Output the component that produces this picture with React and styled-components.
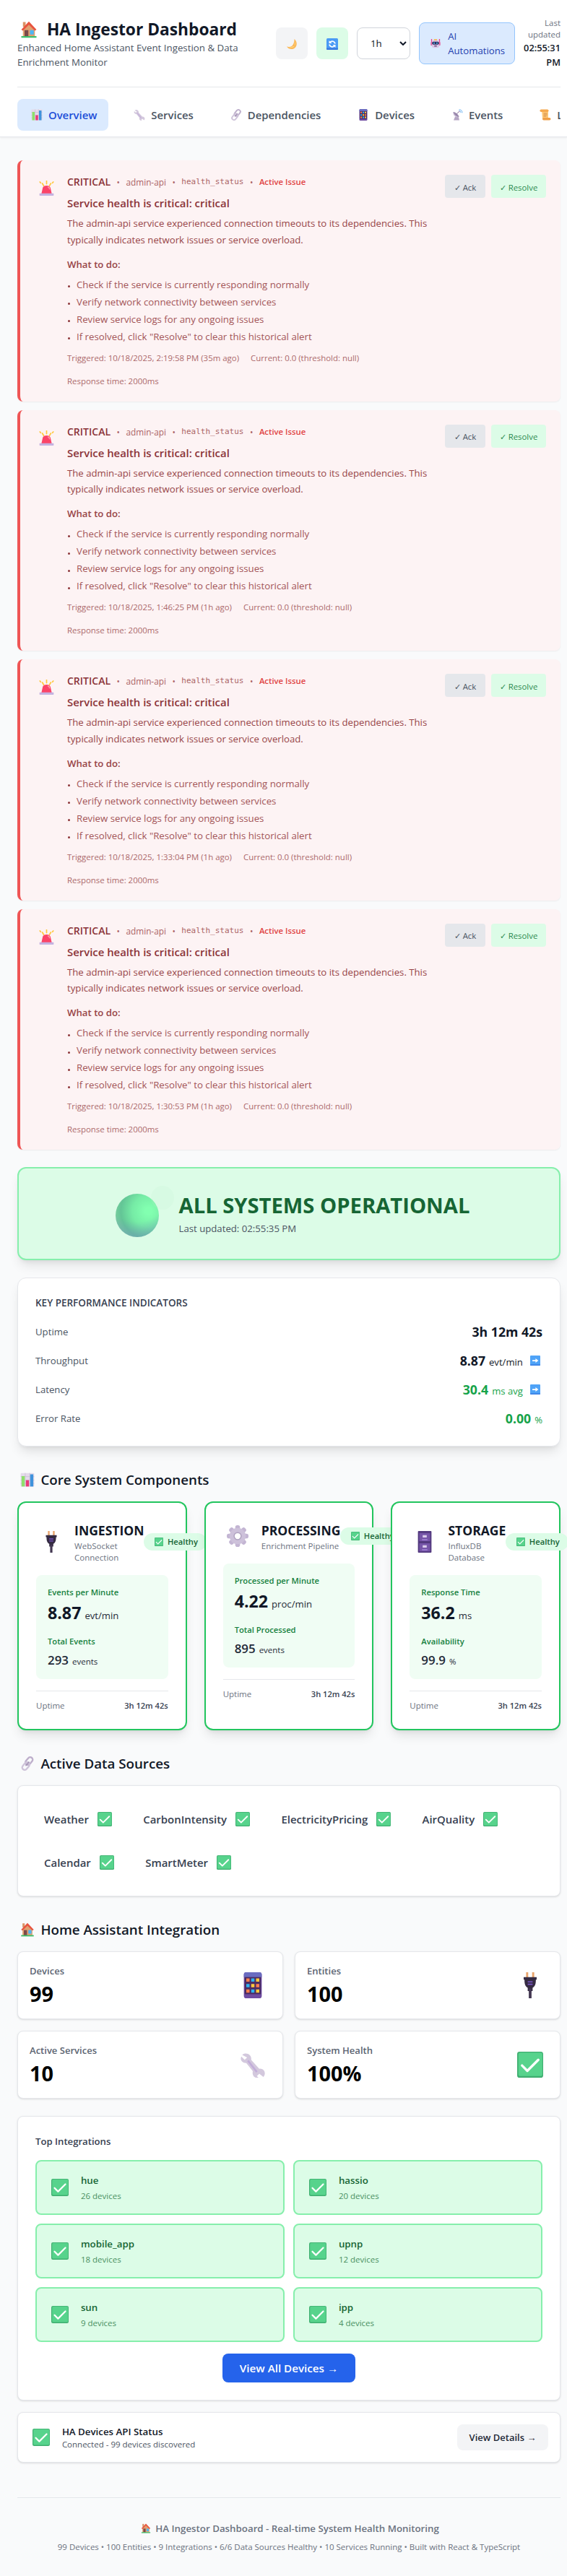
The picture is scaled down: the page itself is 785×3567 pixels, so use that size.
import React from 'react';
import styled, { createGlobalStyle } from 'styled-components';

const GlobalStyle = createGlobalStyle`
  *, *::before, *::after { box-sizing: border-box; }
  html, body { margin: 0; background: #f9fafb; }
  body {
    font-family: "Open Sans", "Noto Sans", sans-serif;
    font-size: 13.25px;
    line-height: 20px;
    color: #111827;
    overflow-x: hidden;
  }
  h1, h2, h3, p, ul { margin: 0; padding: 0; }
  button, select { font-family: inherit; }
`;

/* ---------- icons ---------- */

const IconSvg = styled.svg`
  display: inline-block;
  flex-shrink: 0;
  width: ${(p) => p.$size}px;
  height: ${(p) => p.$size}px;
  margin: 0 ${(p) => p.$size * 0.185}px;
`;

const drawings = {
  house: (
    <>
      <path d="M5 2h5v9H5z" fill="#d99467" />
      <path d="M5 15 16 4l11 11v14H5z" fill="#e0a070" />
      <path d="M2 16 16 1l14 15-3 2L16 7 5 18z" fill="#e8543f" />
      <path d="M8 17h7v12H8z" fill="#7b4a4a" />
      <path d="M18 17h7v8h-7z" fill="#4db5f5" />
      <path d="M2 28h28v3H2z" fill="#3fbf6c" />
    </>
  ),
  moon: (
    <>
      <path d="M23 2c9 8 8 20 1 25-6 5-17 4-22-4 8 2 14 0 17-5 3-4 4-10 4-16z" fill="#fbb95a" />
      <path d="M25 8c2 7 0 14-5 17-4 2-9 2-13 0 8 1 13-2 16-7 1-3 2-6 2-10z" fill="#ffd57e" />
      <circle cx="22" cy="20" r="1.6" fill="#f3a24c" />
    </>
  ),
  refresh: (
    <>
      <rect x="0" y="0" width="32" height="32" rx="3" fill="#4b9bf5" />
      <path d="M0 27h32v2a3 3 0 0 1-3 3H3a3 3 0 0 1-3-3z" fill="#3c7be0" />
      <path d="M24 15a8 8 0 0 0-14-4M8 17a8 8 0 0 0 14 4" fill="none" stroke="#fff" strokeWidth="3.6" />
      <path d="M7 6v8h8zM25 26v-8h-8z" fill="#fff" />
    </>
  ),
  robot: (
    <>
      <path d="M2 2h3v12H2zM27 2h3v12h-3z" fill="#f0418f" />
      <rect x="1" y="12" width="4" height="11" rx="2" fill="#e7468c" />
      <rect x="27" y="12" width="4" height="11" rx="2" fill="#e7468c" />
      <path d="M11 3h10v5H11z" fill="#f7b238" />
      <rect x="4" y="6" width="24" height="24" rx="8" fill="#dcc3e6" />
      <rect x="5" y="11" width="22" height="9" rx="4" fill="#2c2d5c" />
      <circle cx="11.5" cy="15.5" r="2.4" fill="#4fb8f5" />
      <circle cx="20.5" cy="15.5" r="2.4" fill="#4fb8f5" />
      <path d="M12 23h8v3h-8z" fill="#53406e" />
    </>
  ),
  chart: (
    <>
      <rect x="1" y="1" width="30" height="30" rx="2" fill="#e4dbea" />
      <path d="M1 9h30M1 17h30M1 24h30M11 1v30M21 1v30" stroke="#c9bcd5" strokeWidth="1.2" />
      <path d="M3 8h7v23H3z" fill="#8ee06c" />
      <path d="M12.500 17h7v14h-7z" fill="#e83a78" />
      <path d="M22 4h7v27h-7z" fill="#3f93dc" />
    </>
  ),
  wrench: (
    <>
      <path d="M3 4c4-4 12-1 11 6l10 11c6-1 9 6 5 10l-5-4-3 3 2 2c-6 1-8-4-7-8L8 14c-6 0-8-5-6-8l4 4 3-3z" fill="#d3c8dd" />
      <path d="m10 11 11 14" stroke="#c2add9" strokeWidth="2.200" />
    </>
  ),
  link: (
    <g fill="none" strokeLinecap="round">
      <rect x="14" y="1" width="11" height="19" rx="5.500" transform="rotate(40 19.500 10.500)" stroke="#bdaecb" strokeWidth="3.800" />
      <rect x="7" y="12" width="11" height="19" rx="5.500" transform="rotate(40 12.500 21.500)" stroke="#cfc4da" strokeWidth="3.800" />
      <path d="m13 20 6-7" stroke="#a898b8" strokeWidth="3" />
    </g>
  ),
  phone: (
    <>
      <rect x="5" y="0" width="22" height="32" rx="3" fill="#6d4aa0" />
      <path d="M5 6V3a3 3 0 0 1 3-3h16a3 3 0 0 1 3 3v3z" fill="#6a6cc0" />
      <path d="M6 6h20v21H6z" fill="#4b2c62" />
      <path d="M8 7.500h4v4H8zM20 14.500h4v4h-4zM8 21h4v4H8z" fill="#ff7f4d" />
      <path d="M14 7.500h4v4h-4zM8 14.500h4v4H8zM14 21h4v4h-4z" fill="#2fb3f0" />
      <path d="M20 7.500h4v4h-4zM14 14.500h4v4h-4zM20 21h4v4h-4z" fill="#ffc93e" />
    </>
  ),
  satellite: (
    <>
      <path d="M11 19h8l3 12H6z" fill="#b5a6c4" />
      <path d="M5 8c-2 9 6 17 16 14z" fill="#d5cadf" />
      <path d="M5 8c5-1 16 8 16 14C14 22 7 16 5 8z" fill="#9b8aae" />
      <path d="m13 15 8-8" stroke="#8a7a9c" strokeWidth="2" />
      <circle cx="21.500" cy="7" r="2" fill="#c8a5c0" />
      <path d="M21 1.500c6 0 9 4 9 9M21 5c3 0 5 2 5 5" fill="none" stroke="#6db4f2" strokeWidth="2" />
    </>
  ),
  scroll: (
    <>
      <path d="M6 3h18v24H8z" fill="#ffc977" />
      <rect x="1" y="1" width="24" height="7" rx="3.500" fill="#f5a94f" />
      <rect x="8" y="24" width="23" height="7" rx="3.500" fill="#ef9f48" />
      <path d="M11 12h10M11 16h10M11 20h8" stroke="#c98343" strokeWidth="1.800" />
    </>
  ),
  siren: (
    <>
      <path d="m7 6 3 5M16 1v6M25 6l-3 5M2 3l1.500 2M30 3l-1.500 2" stroke="#ffc83d" strokeWidth="2.600" strokeLinecap="round" />
      <path d="M8 15c1-6 15-6 16 0l3 13H5z" fill="#fb4468" />
      <path d="M19 14c2 0 3 2 3 4" fill="none" stroke="#ff9eac" strokeWidth="2" strokeLinecap="round" />
      <rect x="1" y="27" width="30" height="5" rx="1" fill="#c4b2e0" />
    </>
  ),
  check: (
    <>
      <rect x="0" y="0" width="32" height="32" rx="3" fill="#3fae70" />
      <rect x="1.500" y="1" width="29.500" height="29" rx="2.500" fill="#57d38c" />
      <path d="m6 17 6.500 6.500L26 10" fill="none" stroke="#fff" strokeWidth="3" strokeLinecap="round" strokeLinejoin="round" />
    </>
  ),
  plug: (
    <>
      <path d="M11 0h2.600v8H11zM18.400 0H21v8h-2.600z" fill="#e8a46c" />
      <path d="M8 6h16v3h-1c0 6-1 8-4 10v4h-6v-4c-3-2-4-4-4-10H8z" fill="#352b42" />
      <path d="M13 11h6v1.500h-6zM13 14h6v1.500h-6z" fill="#7a55c8" />
      <path d="M14.300 20h3.400v12h-3.400z" fill="#443852" />
    </>
  ),
  gear: (
    <>
      <g fill="#c3b5d3">
        {[0, 45, 90, 135, 180, 225, 270, 315].map((angle) => (
          <rect key={angle} x="12.500" y="0" width="7" height="10" rx="3" transform={`rotate(${angle} 16 16)`} />
        ))}
      </g>
      <circle cx="16" cy="16" r="8.500" fill="none" stroke="#cdc1da" strokeWidth="7" />
      <circle cx="16" cy="16" r="5.200" fill="none" stroke="#b0a3c0" strokeWidth="1.600" />
    </>
  ),
  cabinet: (
    <>
      <rect x="6" y="0" width="20" height="32" rx="1" fill="#52397e" />
      <path d="M8 3h16v12H8zM8 18h16v12H8z" fill="#7655a8" />
      <path d="M13 6h6v3.500h-6zM13 21h6v3.500h-6z" fill="#d9cbea" />
      <path d="M12 12h8v1.500h-8zM12 27h8v1.500h-8z" fill="#a483d8" />
    </>
  ),
  arrow: (
    <>
      <rect x="0" y="0" width="32" height="32" rx="2.500" fill="#4fa3f7" />
      <path d="M0 28h32v1.500a2.500 2.500 0 0 1-2.500 2.500h-27A2.500 2.500 0 0 1 0 29.500z" fill="#3c82e6" />
      <path d="M7 14h10V9l9 7-9 7v-5H7z" fill="#fff" />
    </>
  ),
};

const Icon = ({ name, size, ...rest }) => (
  <IconSvg viewBox="0 0 32 32" $size={size} aria-hidden="true" {...rest}>
    {drawings[name]}
  </IconSvg>
);

/* ---------- header ---------- */

const Header = styled.header`
  background: #fff;
  border-bottom: 1px solid #e5e7eb;
  box-shadow: 0 1px 3px rgba(0, 0, 0, 0.06);
  padding: 0 9px 8px 24px;
  height: 190px;
`;

const HeaderTop = styled.div`
  display: flex;
  align-items: center;
  justify-content: space-between;
  padding: 24px 0;
  height: 120px;
`;

const Brand = styled.div`
  width: 320px;
`;

const BrandTitle = styled.h1`
  display: flex;
  align-items: center;
  gap: 8px;
  height: 32px;
  padding-top: 2px;
  font-size: 22.75px;
  line-height: 32px;
  font-weight: 700;
  white-space: nowrap;
`;

const BrandSubtitle = styled.p`
  font-size: 13.3px;
  line-height: 20px;
  color: #4b5563;
`;

const Controls = styled.div`
  display: flex;
  align-items: center;
  gap: 12px;
`;

const IconButton = styled.button`
  display: flex;
  align-items: center;
  justify-content: center;
  width: 44px;
  height: 44px;
  border: 0;
  padding: 2px 0 0;
  border-radius: 8px;
  background: ${(p) => (p.$active ? '#dcfce7' : '#f3f4f6')};
`;

const RangeSelect = styled.div`
  display: flex;
  align-items: center;
  justify-content: space-between;
  width: 74px;
  height: 44px;
  padding: 0 4px 0 18px;
  border: 1px solid #d1d5db;
  border-radius: 8px;
  background: #fff;
  font-size: 13.3px;
`;

const AutomationsLink = styled.a`
  display: flex;
  align-items: center;
  gap: 8px;
  width: 133px;
  height: 58px;
  padding: 0 12px;
  border: 1px solid #93c5fd;
  border-radius: 8px;
  background: #dbeafe;
  color: #1e40af;
  font-size: 13.2px;
  line-height: 20px;
`;

const LastUpdated = styled.div`
  display: flex;
  flex-direction: column;
  width: 51px;
  text-align: right;
  small { font-size: 11.5px; line-height: 16px; color: #6b7280; }
  strong { font-size: 12.8px; line-height: 20px; font-weight: 600; }
`;

const Nav = styled.nav`
  display: flex;
  gap: 16px;
  padding-top: 16px;
  border-top: 1px solid #e5e7eb;
  overflow: hidden;
`;

const Tab = styled.button`
  display: flex;
  align-items: center;
  flex-shrink: 0;
  gap: 5px;
  height: 44px;
  padding: 0 16px;
  border: 0;
  border-radius: 8px;
  font-size: 14.9px;
  font-weight: 600;
  white-space: nowrap;
  color: ${(p) => (p.$active ? '#1d4ed8' : '#4b5563')};
  background: ${(p) => (p.$active ? '#dbeafe' : 'transparent')};
`;

/* ---------- alerts ---------- */

const Main = styled.main`
  display: flex;
  flex-direction: column;
  padding: 32px 9px 0 24px;
`;

const AlertList = styled.section`
  display: flex;
  flex-direction: column;
  gap: 12px;
  margin-bottom: 24px;
`;

const AlertCard = styled.article`
  display: flex;
  align-items: flex-start;
  padding: 20px;
  height: 333.5px;
  border-left: 4px solid #ef5555;
  border-radius: 8px;
  background: #fdf3f4;
  box-shadow: 0 1px 2px rgba(0, 0, 0, 0.06);
`;

const AlertIcon = styled.div`
  display: flex;
  justify-content: center;
  width: 33px;
  padding-top: 8px;
  margin-right: 12px;
`;

const AlertBody = styled.div`
  flex: 1;
  min-width: 0;
`;

const AlertMeta = styled.div`
  display: flex;
  align-items: center;
  gap: 8.5px;
  height: 20px;
  font-size: 11.8px;
  color: #ab6466;
  white-space: nowrap;
`;

const Severity = styled.strong`
  font-size: 14px;
  font-weight: 600;
  color: #8b3438;
`;

const Metric = styled.code`
  font-family: "DejaVu Sans Mono", "Liberation Mono", monospace;
  font-size: 11px;
`;

const ActiveIssue = styled.span`
  font-size: 11.3px;
  font-weight: 600;
  color: #e04343;
`;

const AlertTitle = styled.h3`
  margin-top: 7px;
  font-size: 14.9px;
  line-height: 24px;
  font-weight: 600;
  color: #8b3438;
`;

const AlertText = styled.p`
  margin-top: 5px;
  width: 510px;
  font-size: 13.2px;
  line-height: 22.75px;
  color: #984548;
`;

const ActionsTitle = styled.p`
  margin-top: 12px;
  font-size: 13.2px;
  font-weight: 600;
  color: #984548;
`;

const ActionsList = styled.ul`
  display: flex;
  flex-direction: column;
  gap: 4px;
  margin-top: 8px;
  list-style: none;
  font-size: 13.25px;
  color: #a35558;
`;

const ActionsItem = styled.li`
  display: flex;
  align-items: center;
  gap: 9px;
  &::before {
    content: "";
    width: 3px;
    height: 3px;
    margin: 6px 0 0 1px;
    border-radius: 50%;
    background: #8b3438;
  }
`;

const AlertFoot = styled.div`
  display: flex;
  flex-direction: column;
  gap: 16px;
  margin-top: 12px;
  font-size: 11.45px;
  line-height: 16px;
  color: #ac696b;
`;

const AlertFootLine = styled.div`
  display: flex;
  gap: 16px;
`;

const AlertButtons = styled.div`
  display: flex;
  gap: 8px;
  margin-left: -60px;
`;

const AlertButton = styled.button`
  width: ${(p) => (p.$tone === 'resolve' ? 76 : 56)}px;
  height: 32px;
  padding: 2px 0 0;
  border: 0;
  border-radius: 4px;
  font-size: 11.4px;
  font-weight: 500;
  color: ${(p) => (p.$tone === 'resolve' ? '#2c8a50' : '#4b5563')};
  background: ${(p) => (p.$tone === 'resolve' ? '#dcfce7' : '#e5e7eb')};
`;

/* ---------- status and KPIs ---------- */

const largeShadow = '0 10px 15px -3px rgba(0,0,0,.1), 0 4px 6px -4px rgba(0,0,0,.1)';
const smallShadow = '0 1px 3px rgba(0,0,0,.1), 0 1px 2px -1px rgba(0,0,0,.1)';

const StatusBanner = styled.section`
  display: flex;
  align-items: center;
  justify-content: center;
  gap: 28px;
  height: 129px;
  margin-bottom: 24px;
  padding-left: 10px;
  border: 2px solid #86efac;
  border-radius: 12px;
  background: #dcfce7;
  box-shadow: ${largeShadow};
`;

const Orb = styled.div`
  position: relative;
  width: 60px;
  height: 60px;
  margin-top: 4px;
  border-radius: 50%;
  background:
    radial-gradient(circle at 50% -10%, transparent 62%, rgba(112, 148, 190, 0.75) 105%),
    radial-gradient(circle at 76% 40%, #82ffb0 8%, #76eca6 38%, #63c596 66%, #8ad6a4 92%);
  &::after {
    content: "";
    position: absolute;
    left: 49px;
    top: -11px;
    width: 32px;
    height: 33px;
    border-radius: 50%;
    background: rgba(190, 245, 205, 0.16);
  }
`;

const BannerTitle = styled.h2`
  font-size: 29.2px;
  line-height: 36px;
  font-weight: 700;
  color: #166534;
`;

const BannerTime = styled.p`
  margin-top: 4px;
  font-size: 13.2px;
  color: #4b5563;
`;

const KpiCard = styled.section`
  display: flex;
  flex-direction: column;
  gap: 12px;
  height: 234px;
  padding: 24px;
  border: 1px solid #e5e7eb;
  border-radius: 12px;
  background: #fff;
  box-shadow: ${largeShadow};
`;

const KpiTitle = styled.h3`
  margin-bottom: 4px;
  font-size: 13.5px;
  line-height: 20px;
  font-weight: 600;
  color: #374151;
`;

const KpiRow = styled.div`
  display: flex;
  align-items: center;
  justify-content: space-between;
  height: 28px;
  color: #4b5563;
  font-size: 13.2px;
`;

const KpiValue = styled.div`
  display: flex;
  align-items: center;
  gap: 8px;
  color: ${(p) => (p.$good ? '#16a34a' : '#111827')};
  strong { font-size: 17.7px; font-weight: 700; line-height: 28px; }
  small { font-size: 13.1px; margin-left: 5px; }
`;

/* ---------- sections ---------- */

const SectionTitle = styled.h2`
  display: flex;
  align-items: center;
  gap: 5px;
  margin: 32px 0 16px;
  font-size: 18.75px;
  line-height: 28px;
  font-weight: 600;
`;

const CoreGrid = styled.div`
  display: grid;
  grid-template-columns: repeat(3, minmax(0, 1fr));
  gap: 24px;
`;

const CoreCard = styled.article`
  position: relative;
  height: 317px;
  padding: 24px;
  border: 2px solid #22c55e;
  border-radius: 12px;
  background: #fff;
  box-shadow: ${largeShadow};
`;

const CoreHead = styled.div`
  display: flex;
  align-items: center;
  justify-content: space-between;
`;

const CoreName = styled.div`
  display: flex;
  align-items: center;
  gap: 12px;
  width: min-content;
`;

const CoreTitle = styled.h3`
  font-size: 17.55px;
  line-height: 28px;
  font-weight: 700;
`;

const CoreSubtitle = styled.p`
  font-size: 11.5px;
  line-height: 16px;
  color: #6b7280;
`;

const HealthBadge = styled.span`
  display: flex;
  align-items: center;
  flex-shrink: 0;
  gap: 4px;
  height: 24px;
  padding: 0 12px;
  border-radius: 12px;
  background: #dcfce7;
  color: #166534;
  font-size: 11.2px;
  font-weight: 600;
`;

const MetricPanel = styled.div`
  display: flex;
  flex-direction: column;
  height: 144px;
  margin: 16px 0;
  padding: 16px;
  border-radius: 8px;
  background: #f0fdf4;
`;

const MetricLabel = styled.span`
  font-size: 11.2px;
  line-height: 16px;
  font-weight: 600;
  color: #15803d;
`;

const MetricValue = styled.div`
  margin: ${(p) => (p.$primary ? '4px 0 12px' : '4px 0 0')};
  line-height: ${(p) => (p.$primary ? 32 : 28)}px;
  color: #1f2937;
  strong {
    font-size: ${(p) => (p.$primary ? 23.2 : 16.9)}px;
    font-weight: ${(p) => (p.$primary ? 700 : 600)};
    color: ${(p) => (p.$primary ? '#111827' : '#1f2937')};
  }
  small { margin-left: 5px; font-size: ${(p) => (p.$primary ? 13.15 : 11.5)}px; }
`;

const CoreFoot = styled.div`
  display: flex;
  justify-content: space-between;
  padding-top: 12px;
  border-top: 1px solid #e5e7eb;
  font-size: 11.5px;
  line-height: 16px;
  color: #6b7280;
  b { font-size: 11.1px; font-weight: 600; color: #374151; }
`;

const SourceCard = styled.section`
  display: flex;
  flex-wrap: wrap;
  gap: 16px;
  height: 154px;
  padding: 24px;
  border: 1px solid #e5e7eb;
  border-radius: 8px;
  background: #fff;
  box-shadow: ${smallShadow};
`;

const Source = styled.div`
  display: flex;
  align-items: center;
  gap: 8px;
  height: 44px;
  padding: 0 12px;
  font-size: 14.95px;
  font-weight: 600;
  color: #374151;
`;

const StatGrid = styled.div`
  display: grid;
  grid-template-columns: 1fr 1fr;
  gap: 16px;
  margin-bottom: 24px;
`;

const StatCard = styled.article`
  display: flex;
  align-items: center;
  justify-content: space-between;
  height: 94px;
  padding: 16px;
  border: 1px solid #e5e7eb;
  border-radius: 8px;
  background: #fff;
  box-shadow: ${smallShadow};
`;

const StatLabel = styled.p`
  font-size: 13.05px;
  font-weight: 600;
  color: #5b6472;
`;

const StatValue = styled.p`
  margin-top: 4px;
  font-size: 28.8px;
  line-height: 36px;
  font-weight: 700;
  color: #000;
`;

const IntegrationsCard = styled.section`
  display: flex;
  flex-direction: column;
  align-items: center;
  height: 394px;
  padding: 24px;
  border: 1px solid #e5e7eb;
  border-radius: 8px;
  background: #fff;
  box-shadow: ${smallShadow};
`;

const IntegrationsTitle = styled.h3`
  align-self: flex-start;
  font-size: 13.15px;
  line-height: 20px;
  font-weight: 600;
  color: #374151;
`;

const IntegrationGrid = styled.div`
  display: grid;
  grid-template-columns: 1fr 1fr;
  gap: 12px;
  width: 100%;
  margin: 16px 0;
`;

const Integration = styled.article`
  display: flex;
  align-items: center;
  gap: 12px;
  height: 76px;
  padding: 0 16px;
  border: 2px solid #86efac;
  border-radius: 8px;
  background: #dcfce7;
`;

const IntegrationName = styled.p`
  font-size: 13.3px;
  font-weight: 600;
  color: #166534;
`;

const IntegrationCount = styled.p`
  margin-top: 4px;
  font-size: 11.5px;
  line-height: 16px;
  color: #4a9062;
`;

const PrimaryButton = styled.button`
  width: 184px;
  height: 40px;
  padding: 0;
  border: 0;
  border-radius: 8px;
  background: #2563eb;
  color: #fff;
  font-size: 15.2px;
  font-weight: 600;
`;

const ApiCard = styled.section`
  display: flex;
  align-items: center;
  gap: 12px;
  height: 70px;
  margin-top: 16px;
  padding: 16px;
  border: 1px solid #e5e7eb;
  border-radius: 8px;
  background: #fff;
  box-shadow: ${smallShadow};
`;

const ApiInfo = styled.div`
  flex: 1;
`;

const ApiTitle = styled.p`
  font-size: 13.3px;
  font-weight: 600;
`;

const ApiText = styled.p`
  font-size: 11.5px;
  line-height: 16px;
  color: #4b5563;
`;

const SecondaryButton = styled.button`
  width: 126px;
  height: 36px;
  padding: 0;
  border: 0;
  border-radius: 8px;
  background: #f3f4f6;
  color: #1f2937;
  font-size: 13px;
  font-weight: 600;
`;

const Footer = styled.footer`
  display: flex;
  flex-direction: column;
  align-items: center;
  gap: 8px;
  margin-top: 48px;
  padding: 32px 0;
  border-top: 1px solid #e5e7eb;
  color: #6b7280;
`;

const FooterTitle = styled.p`
  display: flex;
  align-items: center;
  gap: 4px;
  font-size: 13.3px;
  font-weight: 600;
`;

const FooterText = styled.p`
  font-size: 11.5px;
  line-height: 16px;
`;

/* ---------- data ---------- */

const tabs = [
  ['chart', 'Overview'],
  ['wrench', 'Services'],
  ['link', 'Dependencies'],
  ['phone', 'Devices'],
  ['satellite', 'Events'],
  ['scroll', 'Logs'],
];

const alerts = ['2:19:58 PM (35m ago)', '1:46:25 PM (1h ago)', '1:33:04 PM (1h ago)', '1:30:53 PM (1h ago)'];

const actions = [
  'Check if the service is currently responding normally',
  'Verify network connectivity between services',
  'Review service logs for any ongoing issues',
  'If resolved, click "Resolve" to clear this historical alert',
];

const kpis = [
  { label: 'Uptime', value: '3h 12m 42s' },
  { label: 'Throughput', value: '8.87', unit: 'evt/min', trend: true },
  { label: 'Latency', value: '30.4', unit: 'ms avg', trend: true, good: true },
  { label: 'Error Rate', value: '0.00', unit: '%', good: true },
];

const components = [
  { icon: 'plug', name: 'INGESTION', sub: ['WebSocket', 'Connection'], a: ['Events per Minute', '8.87', 'evt/min'], b: ['Total Events', '293', 'events'] },
  { icon: 'gear', name: 'PROCESSING', sub: ['Enrichment Pipeline'], a: ['Processed per Minute', '4.22', 'proc/min'], b: ['Total Processed', '895', 'events'] },
  { icon: 'cabinet', name: 'STORAGE', sub: ['InfluxDB', 'Database'], a: ['Response Time', '36.2', 'ms'], b: ['Availability', '99.9', '%'] },
];

const sources = ['Weather', 'CarbonIntensity', 'ElectricityPricing', 'AirQuality', 'Calendar', 'SmartMeter'];

const stats = [
  ['Devices', '99', 'phone'],
  ['Entities', '100', 'plug'],
  ['Active Services', '10', 'wrench'],
  ['System Health', '100%', 'check'],
];

const integrations = [
  ['hue', 26],
  ['hassio', 20],
  ['mobile_app', 18],
  ['upnp', 12],
  ['sun', 9],
  ['ipp', 4],
];

/* ---------- parts ---------- */

function Alert({ time }) {
  return (
    <AlertCard>
      <AlertIcon><Icon name="siren" size={21} /></AlertIcon>
      <AlertBody>
        <AlertMeta>
          <Severity>CRITICAL</Severity>
          <span>•</span>
          <span>admin-api</span>
          <span>•</span>
          <Metric>health_status</Metric>
          <span>•</span>
          <ActiveIssue>Active Issue</ActiveIssue>
        </AlertMeta>
        <AlertTitle>Service health is critical: critical</AlertTitle>
        <AlertText>
          The admin-api service experienced connection timeouts to its dependencies. This typically indicates
          network issues or service overload.
        </AlertText>
        <ActionsTitle>What to do:</ActionsTitle>
        <ActionsList>
          {actions.map((action) => <ActionsItem key={action}>{action}</ActionsItem>)}
        </ActionsList>
        <AlertFoot>
          <AlertFootLine>
            <span>Triggered: 10/18/2025, {time}</span>
            <span>Current: 0.0 (threshold: null)</span>
          </AlertFootLine>
          <AlertFootLine>Response time: 2000ms</AlertFootLine>
        </AlertFoot>
      </AlertBody>
      <AlertButtons>
        <AlertButton>✓ Ack</AlertButton>
        <AlertButton $tone="resolve">✓ Resolve</AlertButton>
      </AlertButtons>
    </AlertCard>
  );
}

function CoreComponent({ item }) {
  return (
    <CoreCard>
      <CoreHead>
        <CoreName>
          <Icon name={item.icon} size={30} />
          <div>
            <CoreTitle>{item.name}</CoreTitle>
            <CoreSubtitle>{item.sub.join(' ')}</CoreSubtitle>
          </div>
        </CoreName>
        <HealthBadge><Icon name="check" size={12} />Healthy</HealthBadge>
      </CoreHead>
      <MetricPanel>
        <MetricLabel>{item.a[0]}</MetricLabel>
        <MetricValue $primary><strong>{item.a[1]}</strong><small>{item.a[2]}</small></MetricValue>
        <MetricLabel>{item.b[0]}</MetricLabel>
        <MetricValue><strong>{item.b[1]}</strong><small>{item.b[2]}</small></MetricValue>
      </MetricPanel>
      <CoreFoot><span>Uptime</span><b>3h 12m 42s</b></CoreFoot>
    </CoreCard>
  );
}

export default function App() {
  return (
    <>
      <GlobalStyle />
      <Header>
        <HeaderTop>
          <Brand>
            <BrandTitle><Icon name="house" size={24} />HA Ingestor Dashboard</BrandTitle>
            <BrandSubtitle>Enhanced Home Assistant Event Ingestion &amp; Data Enrichment Monitor</BrandSubtitle>
          </Brand>
          <Controls>
            <IconButton aria-label="Toggle theme"><Icon name="moon" size={16} /></IconButton>
            <IconButton $active aria-label="Refresh"><Icon name="refresh" size={16} /></IconButton>
            <RangeSelect>
              1h
              <svg width="10" height="6" viewBox="0 0 10 6"><path d="m1 1 4 4 4-4" fill="none" stroke="#111827" strokeWidth="2" /></svg>
            </RangeSelect>
            <AutomationsLink><Icon name="robot" size={14} />AI Automations</AutomationsLink>
            <LastUpdated>
              <small>Last updated</small>
              <strong>02:55:31 PM</strong>
            </LastUpdated>
          </Controls>
        </HeaderTop>
        <Nav>
          {tabs.map(([icon, label], i) => (
            <Tab key={label} $active={i === 0}><Icon name={icon} size={16} />{label}</Tab>
          ))}
        </Nav>
      </Header>
      <Main>
        <AlertList>
          {alerts.map((time) => <Alert key={time} time={time} />)}
        </AlertList>
        <StatusBanner>
          <Orb />
          <div>
            <BannerTitle>ALL SYSTEMS OPERATIONAL</BannerTitle>
            <BannerTime>Last updated: 02:55:35 PM</BannerTime>
          </div>
        </StatusBanner>
        <KpiCard>
          <KpiTitle>KEY PERFORMANCE INDICATORS</KpiTitle>
          {kpis.map((kpi) => (
            <KpiRow key={kpi.label}>
              <span>{kpi.label}</span>
              <KpiValue $good={kpi.good}>
                <span><strong>{kpi.value}</strong>{kpi.unit && <small>{kpi.unit}</small>}</span>
                {kpi.trend && <Icon name="arrow" size={14} />}
              </KpiValue>
            </KpiRow>
          ))}
        </KpiCard>
        <SectionTitle><Icon name="chart" size={20} />Core System Components</SectionTitle>
        <CoreGrid>
          {components.map((item) => <CoreComponent key={item.name} item={item} />)}
        </CoreGrid>
        <SectionTitle><Icon name="link" size={20} />Active Data Sources</SectionTitle>
        <SourceCard>
          {sources.map((source) => (
            <Source key={source}>{source}<Icon name="check" size={20} /></Source>
          ))}
        </SourceCard>
        <SectionTitle><Icon name="house" size={20} />Home Assistant Integration</SectionTitle>
        <StatGrid>
          {stats.map(([label, value, icon]) => (
            <StatCard key={label}>
              <div>
                <StatLabel>{label}</StatLabel>
                <StatValue>{value}</StatValue>
              </div>
              <Icon name={icon} size={36} />
            </StatCard>
          ))}
        </StatGrid>
        <IntegrationsCard>
          <IntegrationsTitle>Top Integrations</IntegrationsTitle>
          <IntegrationGrid>
            {integrations.map(([name, count]) => (
              <Integration key={name}>
                <Icon name="check" size={24} />
                <div>
                  <IntegrationName>{name}</IntegrationName>
                  <IntegrationCount>{count} devices</IntegrationCount>
                </div>
              </Integration>
            ))}
          </IntegrationGrid>
          <PrimaryButton>View All Devices →</PrimaryButton>
        </IntegrationsCard>
        <ApiCard>
          <Icon name="check" size={24} />
          <ApiInfo>
            <ApiTitle>HA Devices API Status</ApiTitle>
            <ApiText>Connected - 99 devices discovered</ApiText>
          </ApiInfo>
          <SecondaryButton>View Details →</SecondaryButton>
        </ApiCard>
        <Footer>
          <FooterTitle><Icon name="house" size={14} />HA Ingestor Dashboard - Real-time System Health Monitoring</FooterTitle>
          <FooterText>
            99 Devices • 100 Entities • 9 Integrations • 6/6 Data Sources Healthy • 10 Services Running • Built with
            React &amp; TypeScript
          </FooterText>
        </Footer>
      </Main>
    </>
  );
}
